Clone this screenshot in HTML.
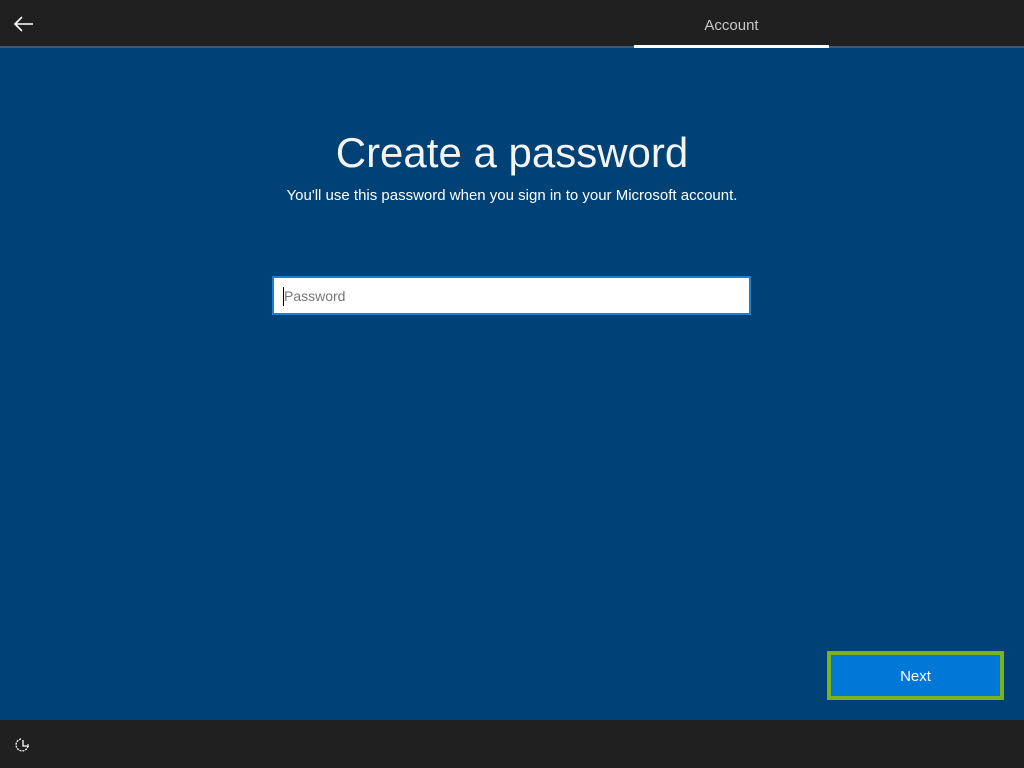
<!DOCTYPE html>
<html><head><style>
body{margin:0;width:1024px;height:768px;background:#004275;font-family:"Liberation Sans",sans-serif;position:relative;overflow:hidden}
.top{position:absolute;left:0;top:0;width:1024px;height:46px;background:#202020}
.line{position:absolute;left:0;top:46px;width:1024px;height:2px;background:#3c5a75}
.tab{position:absolute;left:634px;top:45px;width:195px;height:3px;background:#fff}
.acc{position:absolute;left:634px;width:195px;top:17px;text-align:center;color:#c8c8c8;font-size:15px}
.bot{position:absolute;left:0;top:720px;width:1024px;height:48px;background:#202020}
h1{position:absolute;top:129px;left:0;width:1024px;text-align:center;margin:0;font-weight:normal;font-size:42px;color:#f4f4f4}
.sub{position:absolute;top:187px;left:0;width:1024px;text-align:center;color:#fff;font-size:15px}
.inp{position:absolute;left:272px;top:276px;width:475px;height:35px;background:#fff;border:2px solid #1a7fd0}
.inp span{position:absolute;left:10px;top:10px;color:#777;font-size:14px}
.inp i{position:absolute;left:9px;top:9px;width:1px;height:19px;background:#000}
.btn{position:absolute;left:827px;top:651px;width:169px;height:41px;border:4px solid #7ab317;background:#0078d7;color:#fff;text-align:center;line-height:43px;font-size:15px}
</style></head><body>
<div class="top"></div><div class="line"></div><div class="tab"></div>
<svg style="position:absolute;left:13px;top:15px" width="22" height="18" viewBox="0 0 22 18"><path d="M20 9H2M9 2L2 9l7 7" stroke="#fff" stroke-width="1.6" fill="none"/></svg>
<div class="acc">Account</div>
<h1>Create a password</h1>
<div class="sub">You'll use this password when you sign in to your Microsoft account.</div>
<div class="inp"><i></i><span>Password</span></div>
<div class="btn">Next</div>
<div class="bot"></div>
<svg style="position:absolute;left:15px;top:736px" width="18" height="18" viewBox="0 0 18 18"><path d="M6 3A6 6 0 1 0 13 8" stroke="#fff" stroke-width="1.3" fill="none" stroke-dasharray="2 1"/><path d="M8 4v6h6" stroke="#fff" stroke-width="1.3" fill="none"/></svg>
</body></html>
